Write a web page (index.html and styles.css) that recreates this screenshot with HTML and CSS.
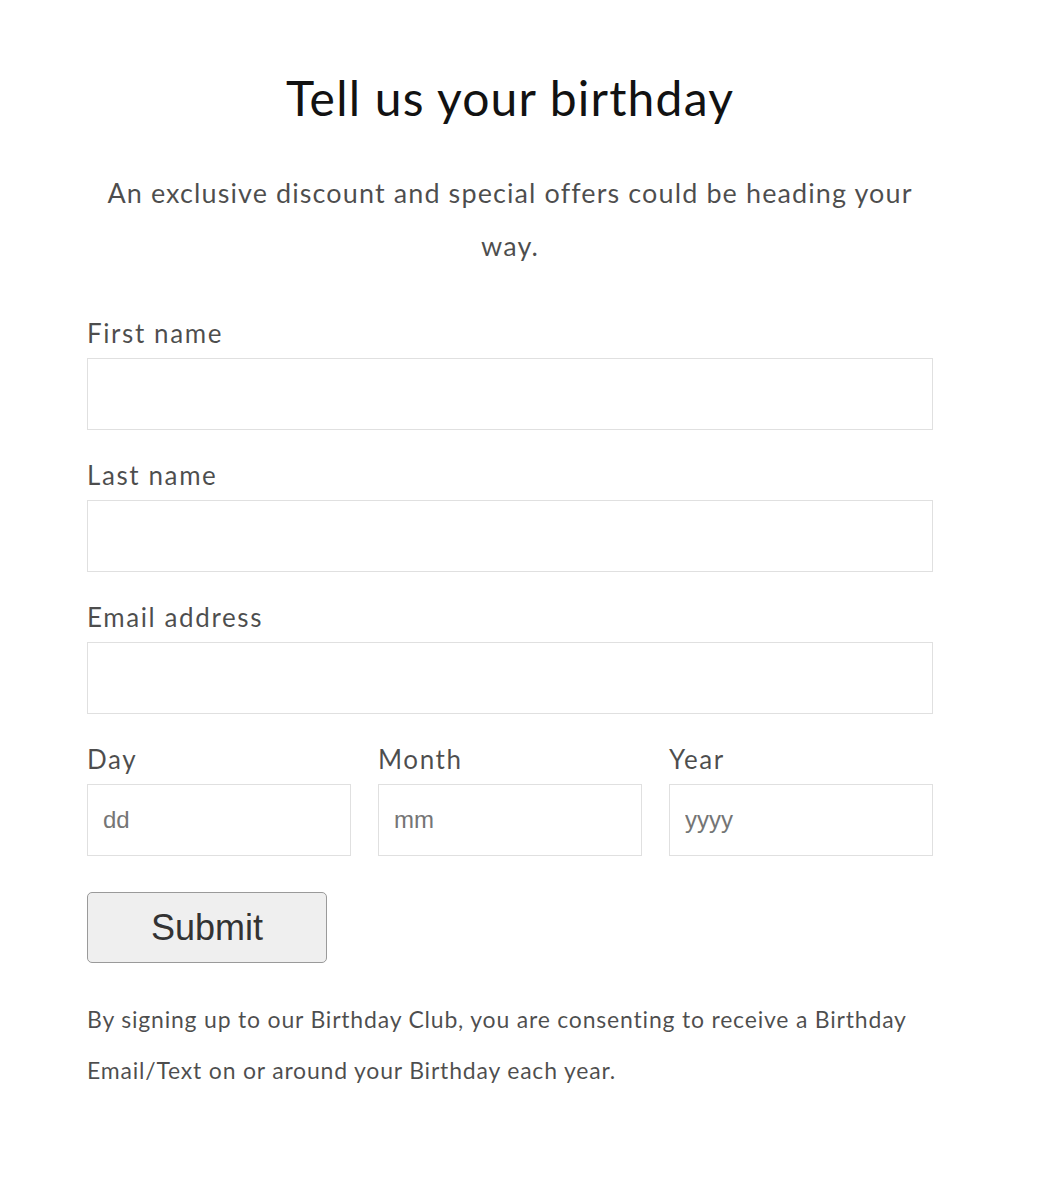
FILE: index.html
```html
<!DOCTYPE html>
<html lang="en">
<head>
<meta charset="utf-8">
<title>Tell us your birthday</title>
<link rel="stylesheet" href="styles.css">
</head>
<body>
<main class="page">
  <h1 class="title">Tell us your birthday</h1>
  <p class="intro">An exclusive discount and special offers could be heading your way.</p>
  <form class="form">
    <div class="field">
      <label class="label" for="fn">First name</label>
      <input class="input" id="fn" type="text">
    </div>
    <div class="field">
      <label class="label" for="ln">Last name</label>
      <input class="input" id="ln" type="text">
    </div>
    <div class="field">
      <label class="label" for="em">Email address</label>
      <input class="input" id="em" type="email">
    </div>
    <div class="date-row">
      <div class="field">
        <label class="label" for="dd">Day</label>
        <input class="input small" id="dd" type="text" placeholder="dd">
      </div>
      <div class="field">
        <label class="label" for="mm">Month</label>
        <input class="input small" id="mm" type="text" placeholder="mm">
      </div>
      <div class="field">
        <label class="label" for="yy">Year</label>
        <input class="input small" id="yy" type="text" placeholder="yyyy">
      </div>
    </div>
    <button class="submit" type="button">Submit</button>
  </form>
  <p class="note">By signing up to our Birthday Club, you are consenting to receive a Birthday Email/Text on or around your Birthday each year.</p>
</main>
</body>
</html>
```
FILE: styles.css
```css
* { box-sizing: border-box; }
html, body { margin: 0; padding: 0; background: #fff; }
body {
  font-family: "Lato", "Liberation Sans", sans-serif;
  color: rgba(18,18,18,0.75);
}
.page {
  width: 846px;
  margin: 0 0 0 87px;
  padding-top: 66px;
}
.title {
  margin: 0;
  text-align: center;
  font-weight: 400;
  font-size: 48px;
  line-height: 64px;
  letter-spacing: 1.2px;
  color: #121212;
}
.intro {
  margin: 36px 0 0;
  text-align: center;
  font-size: 27px;
  line-height: 53px;
  letter-spacing: 1.1px;
  padding: 0 10px;
}
.form {
  margin-top: 45px;
  display: flex;
  flex-direction: column;
}
.field {
  display: flex;
  flex-direction: column;
  margin-bottom: 29px;
}
.label {
  font-size: 26px;
  line-height: 32px;
  letter-spacing: 1.6px;
  margin-bottom: 9px;
}
.input {
  height: 72px;
  width: 100%;
  border: 1px solid #e0e0e0;
  background: #fff;
  padding: 0 15px;
  font-family: "Liberation Sans", Arial, sans-serif;
  font-size: 24px;
  color: #333;
  outline: none;
}
.input::placeholder { color: #757575; }
.date-row {
  display: grid;
  grid-template-columns: repeat(3, 1fr);
  column-gap: 27px;
}
.submit {
  margin-top: 7px;
  width: 240px;
  height: 71px;
  background: #efefef;
  border: 1px solid #9a9a9a;
  border-radius: 5px;
  font-family: "Liberation Sans", Arial, sans-serif;
  font-size: 36px;
  color: #333;
  padding: 0;
}
.note {
  margin: 31px 0 0;
  font-size: 23px;
  line-height: 51px;
  letter-spacing: 0.8px;
}
```
